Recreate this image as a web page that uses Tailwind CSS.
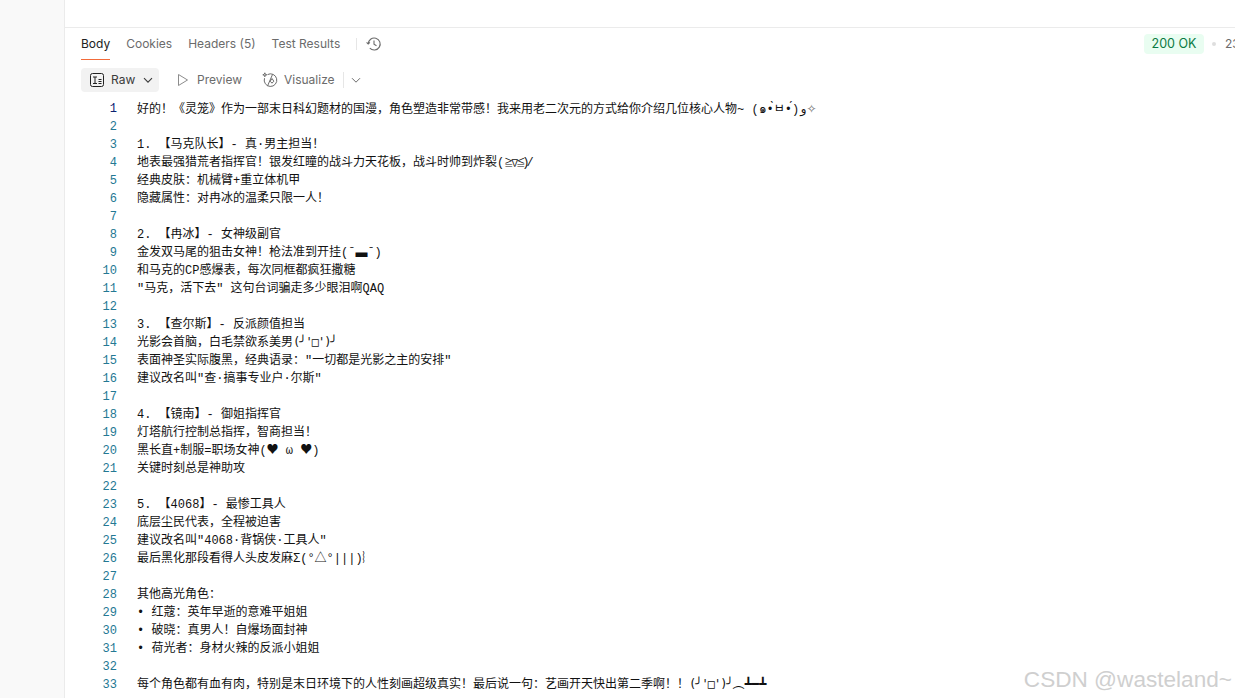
<!DOCTYPE html>
<html lang="zh">
<head>
<meta charset="utf-8">
<script src="https://cdn.jsdelivr.net/npm/@tailwindcss/browser@4"></script>
<title>Response</title>
</head>
<body class="bg-white overflow-hidden">
<div class="relative flex h-[698px] w-[1235px] overflow-hidden bg-white">
  <aside class="h-full w-[65px] shrink-0 border-r border-[#ebebeb] bg-[#f9f9f9]"></aside>
  <main class="min-w-0 flex-1">
    <div class="h-[28px] border-b border-[#ebebeb]"></div>
    <div class="flex h-[32px] items-center justify-between pl-[16px] font-['Inter',sans-serif] text-[12px] text-[#6b6b6b]">
      <div class="flex h-full items-center gap-[16px]">
        <span class="flex h-full items-center border-b border-[#f26b3a] text-[#212121]">Body</span>
        <span>Cookies</span>
        <span>Headers <span>(5)</span></span>
        <span>Test Results</span>
        <span class="h-[12px] w-px bg-[#e6e6e6]"></span>
        <svg class="ml-[-7px]" width="16" height="16" viewBox="0 0 16 16" fill="none" stroke="#6b6b6b" stroke-width="1.1"><path d="M2.2 8a6 6 0 1 1 1.6 4.1"/><path d="M.6 6.4 2.2 8l1.700-1.600"/><path d="M8 4.500V8.300l2.500 1.500"/></svg>
      </div>
      <div class="flex w-[91px] shrink-0 items-center overflow-hidden">
        <span class="h-[20px] w-[60px] shrink-0 whitespace-nowrap rounded-[4px] bg-[#e9fdf1] text-center text-[12.500px] leading-[20px] text-[#0a7a43]">200 OK</span>
        <span class="ml-[8px] h-[4px] w-[4px] shrink-0 rounded-full bg-[#dedede]"></span>
        <span class="ml-[9px] shrink-0 whitespace-nowrap">23 ms</span>
      </div>
    </div>
    <div class="mt-[8px] flex h-[24px] items-center pl-[16px] font-['Inter',sans-serif] text-[12px] text-[#6b6b6b]">
      <div class="flex h-[24px] w-[78px] items-center rounded-[4px] bg-[#f2f2f2] pl-[9px] text-[#3b3b3b]">
        <svg width="14" height="14" viewBox="0 0 14 14" fill="none" stroke="#212121" stroke-width="1"><rect x=".5" y=".5" width="13" height="13" rx="2"/><path d="M3 4h4M5 4v6M3 10.500h4M8.500 6.500H11.500M8.500 8.500H11.500M8.500 10.500H11.500"/></svg>
        <span class="ml-[7px]">Raw</span>
        <svg class="ml-[8px]" width="10" height="10" viewBox="0 0 10 10" fill="none" stroke="#3b3b3b" stroke-width="1.1"><path d="m1 3.200 4 4 4-4"/></svg>
      </div>
      <svg class="ml-[18px]" width="12" height="14" viewBox="0 0 12 14" fill="none" stroke="#8c8c8c" stroke-width="1"><path d="M1.500 1.500v11l9-5.500z"/></svg>
      <span class="ml-[8px]">Preview</span>
      <svg class="ml-[20px]" width="16" height="16" viewBox="0 0 16 16" fill="none" stroke="#6b6b6b" stroke-width="1"><path d="M5.500 2.600a6.300 6.300 0 1 1-3 3.600"/><path d="M10.500 2.500 5.500 14"/><path d="M10 6.500 8.200 9.200l1.800 2 1.800-2z"/><path d="M2.800.8 3.300 2.300l1.500.5-1.500.5-.5 1.500-.5-1.500-1.500-.5 1.500-.5z"/></svg>
      <span class="ml-[6px]">Visualize</span>
      <span class="ml-[8px] h-[16px] w-px bg-[#e6e6e6]"></span>
      <svg class="ml-[7px]" width="10" height="10" viewBox="0 0 10 10" fill="none" stroke="#6b6b6b" stroke-width="1"><path d="m1 3.200 4 4 4-4"/></svg>
    </div>
    <div class="mt-[8px] font-['Liberation_Mono','Noto_Sans_CJK_SC',monospace] text-[12px] leading-[18px] text-[#111111]">
      <div class="flex h-[18px]"><span class="w-[52px] shrink-0 text-right text-[#0b216f]">1</span><span class="ml-[20px] whitespace-pre">好的！《灵笼》作为一部末日科幻题材的国漫，角色塑造非常带感！我来用老二次元的方式给你介绍几位核心人物~ (๑•̀ㅂ•́)و<span class="font-['DejaVu_Sans',sans-serif] text-[#777777]">✧</span></span></div>
      <div class="flex h-[18px]"><span class="w-[52px] shrink-0 text-right text-[#237893]">2</span><span class="ml-[20px] whitespace-pre"></span></div>
      <div class="flex h-[18px]"><span class="w-[52px] shrink-0 text-right text-[#237893]">3</span><span class="ml-[20px] whitespace-pre">1. 【马克队长】- 真·男主担当！</span></div>
      <div class="flex h-[18px]"><span class="w-[52px] shrink-0 text-right text-[#237893]">4</span><span class="ml-[20px] whitespace-pre">地表最强猎荒者指挥官！银发红瞳的战斗力天花板，战斗时帅到炸裂(<span class="text-[9px] tracking-[-3px]">≧∇≦</span><span class="tracking-[-3px]">)</span>/</span></div>
      <div class="flex h-[18px]"><span class="w-[52px] shrink-0 text-right text-[#237893]">5</span><span class="ml-[20px] whitespace-pre">经典皮肤：机械臂+重立体机甲</span></div>
      <div class="flex h-[18px]"><span class="w-[52px] shrink-0 text-right text-[#237893]">6</span><span class="ml-[20px] whitespace-pre">隐藏属性：对冉冰的温柔只限一人！</span></div>
      <div class="flex h-[18px]"><span class="w-[52px] shrink-0 text-right text-[#237893]">7</span><span class="ml-[20px] whitespace-pre"></span></div>
      <div class="flex h-[18px]"><span class="w-[52px] shrink-0 text-right text-[#237893]">8</span><span class="ml-[20px] whitespace-pre">2. 【冉冰】- 女神级副官</span></div>
      <div class="flex h-[18px]"><span class="w-[52px] shrink-0 text-right text-[#237893]">9</span><span class="ml-[20px] whitespace-pre">金发双马尾的狙击女神！枪法准到开挂(ˉ▃ˉ)</span></div>
      <div class="flex h-[18px]"><span class="w-[52px] shrink-0 text-right text-[#237893]">10</span><span class="ml-[20px] whitespace-pre">和马克的CP感爆表，每次同框都疯狂撒糖</span></div>
      <div class="flex h-[18px]"><span class="w-[52px] shrink-0 text-right text-[#237893]">11</span><span class="ml-[20px] whitespace-pre">"马克，活下去" 这句台词骗走多少眼泪啊QAQ</span></div>
      <div class="flex h-[18px]"><span class="w-[52px] shrink-0 text-right text-[#237893]">12</span><span class="ml-[20px] whitespace-pre"></span></div>
      <div class="flex h-[18px]"><span class="w-[52px] shrink-0 text-right text-[#237893]">13</span><span class="ml-[20px] whitespace-pre">3. 【查尔斯】- 反派颜值担当</span></div>
      <div class="flex h-[18px]"><span class="w-[52px] shrink-0 text-right text-[#237893]">14</span><span class="ml-[20px] whitespace-pre">光影会首脑，白毛禁欲系美男<span class="font-['DejaVu_Sans_Mono',monospace] leading-[0] tracking-[-1px]">(╯'□')╯</span></span></div>
      <div class="flex h-[18px]"><span class="w-[52px] shrink-0 text-right text-[#237893]">15</span><span class="ml-[20px] whitespace-pre">表面神圣实际腹黑，经典语录："一切都是光影之主的安排"</span></div>
      <div class="flex h-[18px]"><span class="w-[52px] shrink-0 text-right text-[#237893]">16</span><span class="ml-[20px] whitespace-pre">建议改名叫"查·搞事专业户·尔斯"</span></div>
      <div class="flex h-[18px]"><span class="w-[52px] shrink-0 text-right text-[#237893]">17</span><span class="ml-[20px] whitespace-pre"></span></div>
      <div class="flex h-[18px]"><span class="w-[52px] shrink-0 text-right text-[#237893]">18</span><span class="ml-[20px] whitespace-pre">4. 【镜南】- 御姐指挥官</span></div>
      <div class="flex h-[18px]"><span class="w-[52px] shrink-0 text-right text-[#237893]">19</span><span class="ml-[20px] whitespace-pre">灯塔航行控制总指挥，智商担当！</span></div>
      <div class="flex h-[18px]"><span class="w-[52px] shrink-0 text-right text-[#237893]">20</span><span class="ml-[20px] whitespace-pre">黑长直+制服=职场女神(<span class="font-['Noto_Sans_CJK_SC',sans-serif] leading-[0]">♥</span> ω <span class="font-['Noto_Sans_CJK_SC',sans-serif] leading-[0]">♥</span>)</span></div>
      <div class="flex h-[18px]"><span class="w-[52px] shrink-0 text-right text-[#237893]">21</span><span class="ml-[20px] whitespace-pre">关键时刻总是神助攻</span></div>
      <div class="flex h-[18px]"><span class="w-[52px] shrink-0 text-right text-[#237893]">22</span><span class="ml-[20px] whitespace-pre"></span></div>
      <div class="flex h-[18px]"><span class="w-[52px] shrink-0 text-right text-[#237893]">23</span><span class="ml-[20px] whitespace-pre">5. 【4068】- 最惨工具人</span></div>
      <div class="flex h-[18px]"><span class="w-[52px] shrink-0 text-right text-[#237893]">24</span><span class="ml-[20px] whitespace-pre">底层尘民代表，全程被迫害</span></div>
      <div class="flex h-[18px]"><span class="w-[52px] shrink-0 text-right text-[#237893]">25</span><span class="ml-[20px] whitespace-pre">建议改名叫"4068·背锅侠·工具人"</span></div>
      <div class="flex h-[18px]"><span class="w-[52px] shrink-0 text-right text-[#237893]">26</span><span class="ml-[20px] whitespace-pre">最后黑化那段看得人头皮发麻Σ(°△°|||)︴</span></div>
      <div class="flex h-[18px]"><span class="w-[52px] shrink-0 text-right text-[#237893]">27</span><span class="ml-[20px] whitespace-pre"></span></div>
      <div class="flex h-[18px]"><span class="w-[52px] shrink-0 text-right text-[#237893]">28</span><span class="ml-[20px] whitespace-pre">其他高光角色：</span></div>
      <div class="flex h-[18px]"><span class="w-[52px] shrink-0 text-right text-[#237893]">29</span><span class="ml-[20px] whitespace-pre">• 红蔻：英年早逝的意难平姐姐</span></div>
      <div class="flex h-[18px]"><span class="w-[52px] shrink-0 text-right text-[#237893]">30</span><span class="ml-[20px] whitespace-pre">• 破晓：真男人！自爆场面封神</span></div>
      <div class="flex h-[18px]"><span class="w-[52px] shrink-0 text-right text-[#237893]">31</span><span class="ml-[20px] whitespace-pre">• 荷光者：身材火辣的反派小姐姐</span></div>
      <div class="flex h-[18px]"><span class="w-[52px] shrink-0 text-right text-[#237893]">32</span><span class="ml-[20px] whitespace-pre"></span></div>
      <div class="flex h-[18px]"><span class="w-[52px] shrink-0 text-right text-[#237893]">33</span><span class="ml-[20px] whitespace-pre">每个角色都有血有肉，特别是末日环境下的人性刻画超级真实！最后说一句：艺画开天快出第二季啊！！<span class="font-['DejaVu_Sans_Mono',monospace] leading-[0] tracking-[-1px]">(╯'□')╯</span>︵<span class="font-['DejaVu_Sans_Mono',monospace] leading-[0]">┻━┻</span></span></div>
    </div>
  </main>
  <div class="absolute bottom-[5px] right-[3px] font-['Liberation_Sans',sans-serif] text-[22.600px] leading-[26px] text-[#cfcfcf]">CSDN @wasteland~</div>
</div>
</body>
</html>
